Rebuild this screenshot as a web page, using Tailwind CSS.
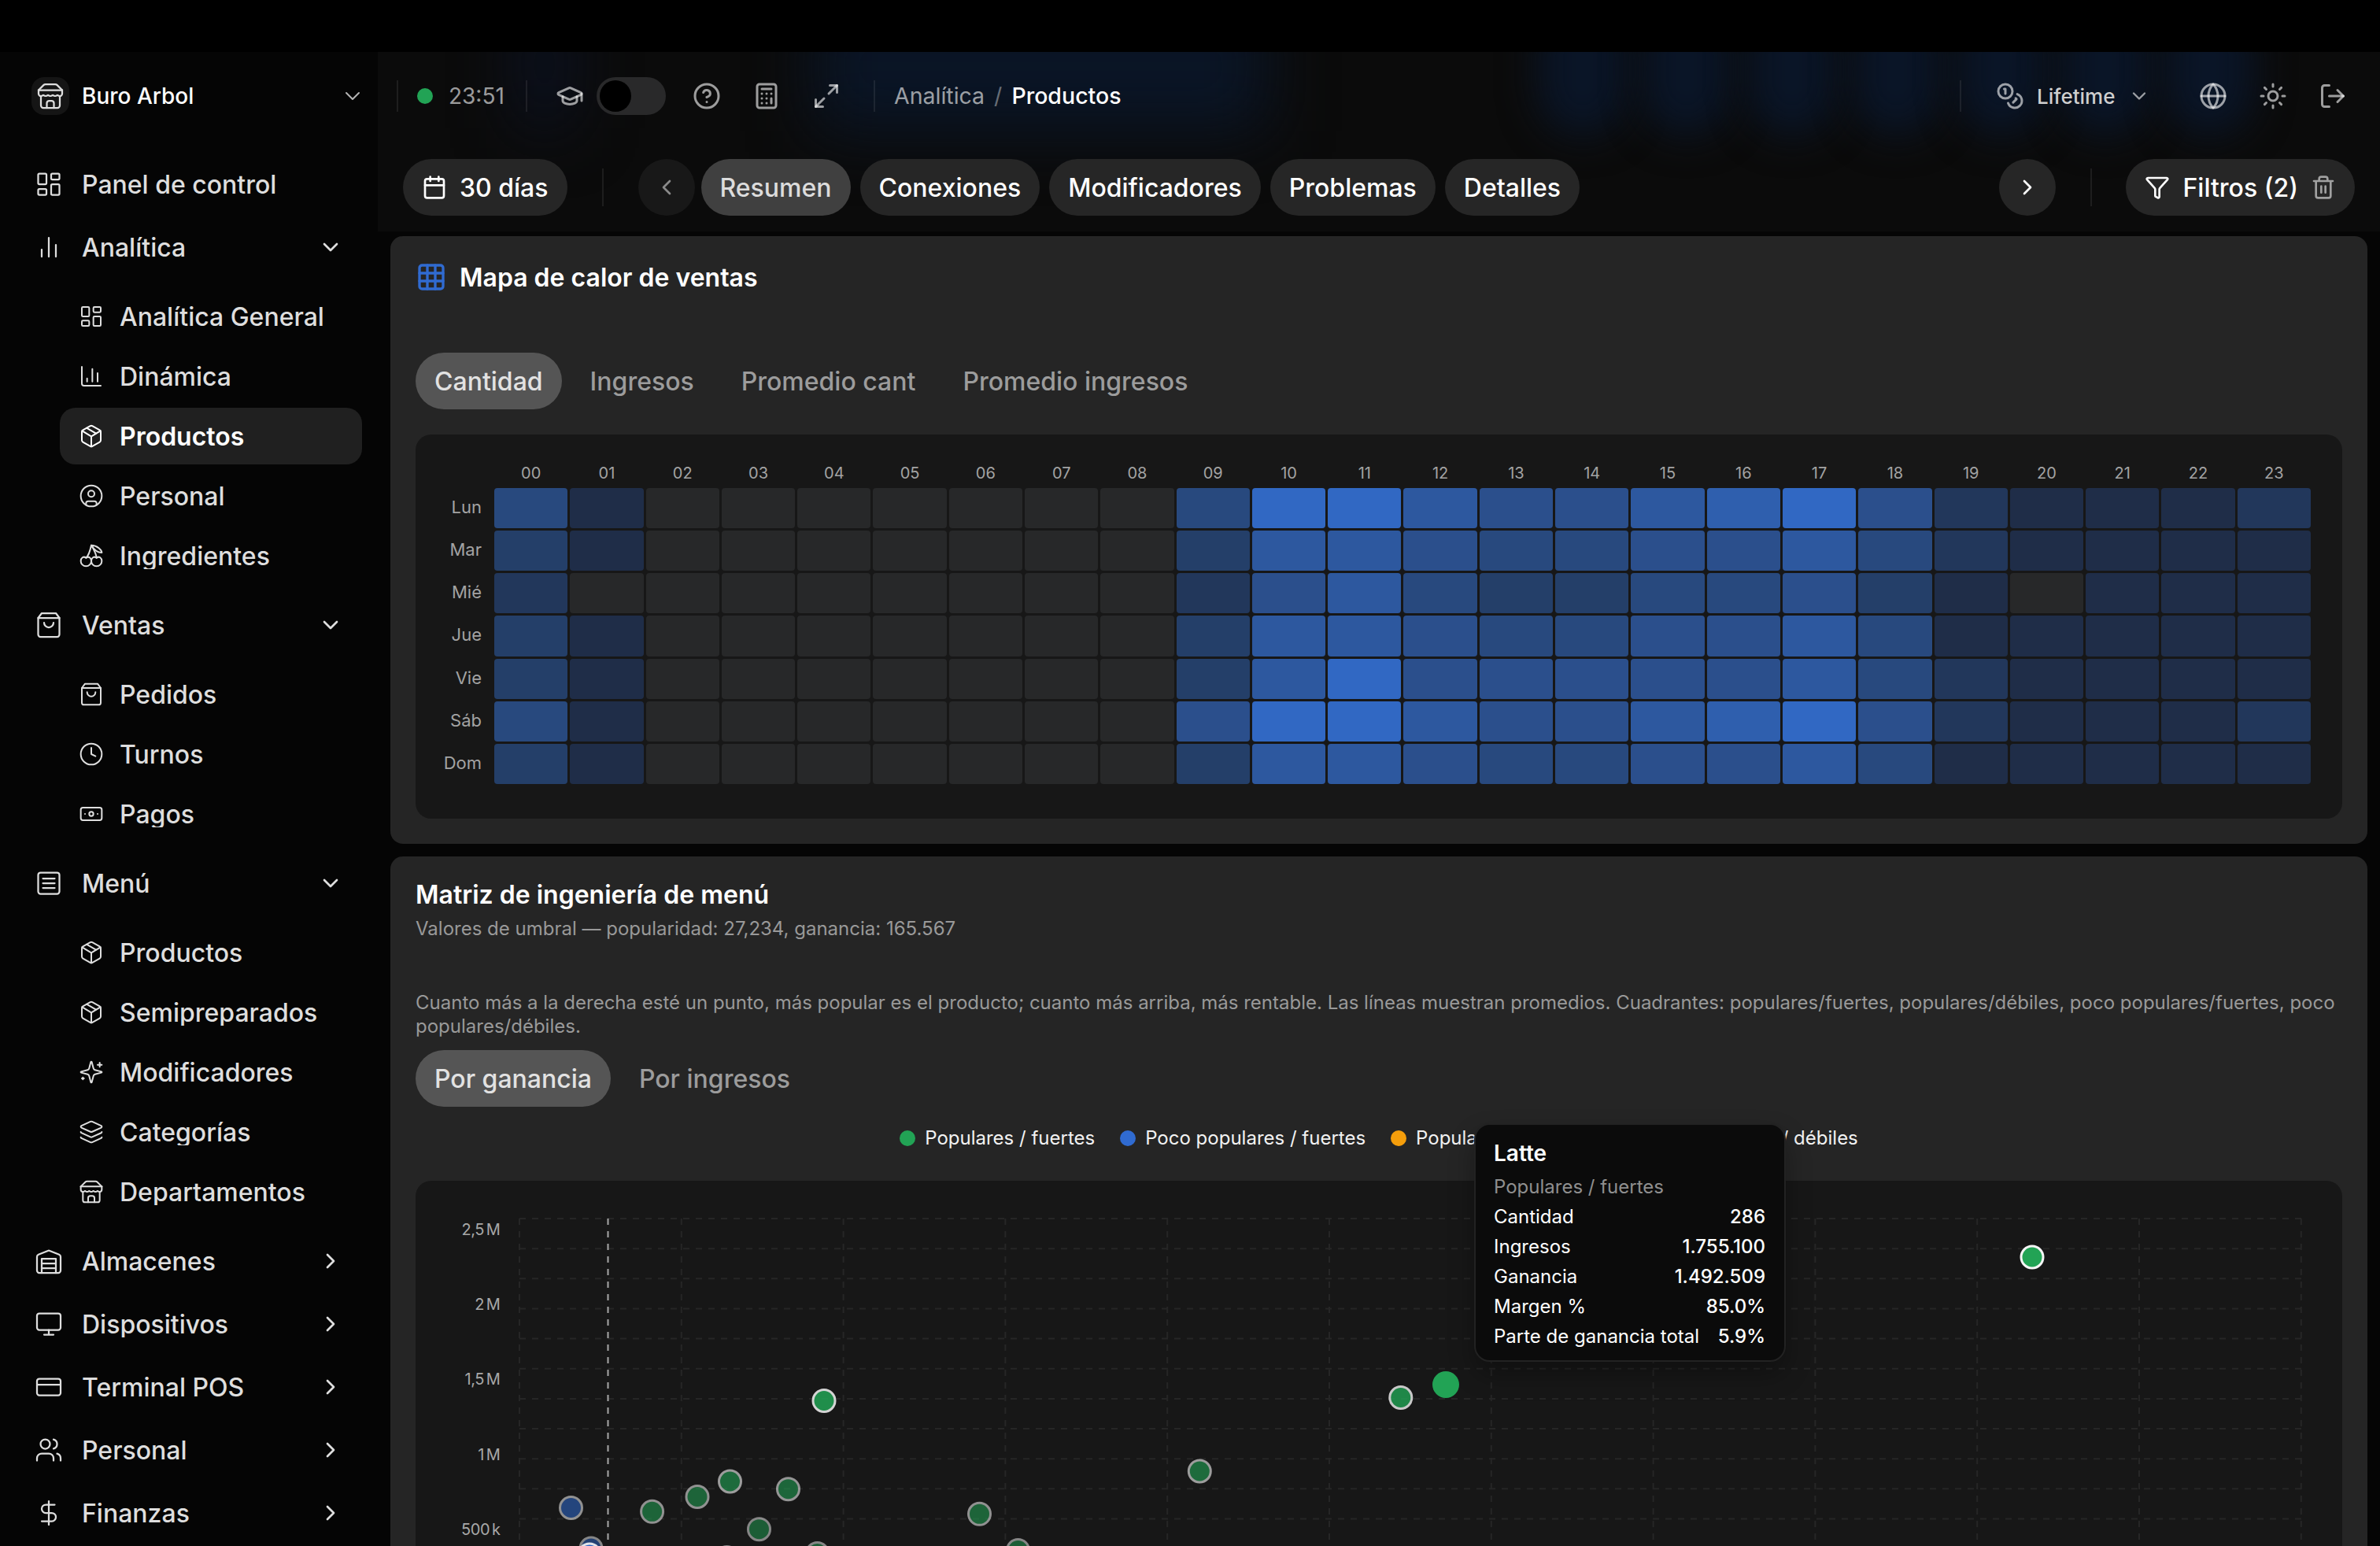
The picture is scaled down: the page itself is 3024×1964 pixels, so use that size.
<!DOCTYPE html>
<html lang="es">
  <head>
    <meta charset="UTF-8" />
    <meta name="viewport" content="width=device-width, initial-scale=1.0" />
    <title>Productos - Buro Arbol</title>
    <script src="https://cdn.jsdelivr.net/npm/@tailwindcss/browser@4"></script>
  </head>
  <body class="bg-black overflow-hidden font-['Inter','Liberation_Sans',sans-serif] [font-variation-settings:'opsz'_16]">
    <!-- icons -->
    <svg class="hidden">
      <symbol id="store" viewBox="0 0 24 24"><path d="m2 7 4.41-4.41A2 2 0 0 1 7.83 2h8.34a2 2 0 0 1 1.42.59L22 7" /><path d="M4 12v8a2 2 0 0 0 2 2h12a2 2 0 0 0 2-2v-8" /><path d="M15 22v-4a2 2 0 0 0-2-2h-2a2 2 0 0 0-2 2v4" /><path d="M2 7h20" /><path d="M22 7v3a2 2 0 0 1-2 2a2.7 2.7 0 0 1-1.59-.63.7.7 0 0 0-.82 0A2.7 2.7 0 0 1 16 12a2.7 2.7 0 0 1-1.59-.63.7.7 0 0 0-.82 0A2.7 2.7 0 0 1 12 12a2.7 2.7 0 0 1-1.59-.63.7.7 0 0 0-.82 0A2.7 2.7 0 0 1 8 12a2.7 2.7 0 0 1-1.59-.63.7.7 0 0 0-.82 0A2.7 2.7 0 0 1 4 12a2 2 0 0 1-2-2V7" /></symbol>
      <symbol id="down" viewBox="0 0 24 24"><path d="m6 9 6 6 6-6" /></symbol>
      <symbol id="right" viewBox="0 0 24 24"><path d="m9 18 6-6-6-6" /></symbol>
      <symbol id="left" viewBox="0 0 24 24"><path d="m15 18-6-6 6-6" /></symbol>
      <symbol id="dashboard" viewBox="0 0 24 24"><rect width="7" height="9" x="3" y="3" rx="1" /><rect width="7" height="5" x="14" y="3" rx="1" /><rect width="7" height="9" x="14" y="12" rx="1" /><rect width="7" height="5" x="3" y="16" rx="1" /></symbol>
      <symbol id="bars" viewBox="0 0 24 24"><path d="M18 20V10M12 20V4M6 20v-6" /></symbol>
      <symbol id="chart" viewBox="0 0 24 24"><path d="M3 3v16a2 2 0 0 0 2 2h16M18 17V9M13 17V5M8 17v-3" /></symbol>
      <symbol id="package" viewBox="0 0 24 24"><path d="M11 21.73a2 2 0 0 0 2 0l7-4A2 2 0 0 0 21 16V8a2 2 0 0 0-1-1.73l-7-4a2 2 0 0 0-2 0l-7 4A2 2 0 0 0 3 8v8a2 2 0 0 0 1 1.73z" /><path d="M12 22V12" /><path d="m3.3 7 7.703 4.734a2 2 0 0 0 1.994 0L20.7 7" /><path d="m7.5 4.27 9 5.15" /></symbol>
      <symbol id="user" viewBox="0 0 24 24"><circle cx="12" cy="12" r="10" /><circle cx="12" cy="10" r="3" /><path d="M7 20.662V19a2 2 0 0 1 2-2h6a2 2 0 0 1 2 2v1.662" /></symbol>
      <symbol id="cherry" viewBox="0 0 24 24"><path d="M2 17a5 5 0 0 0 10 0c0-2.76-2.5-5-5-3-2.5-2-5 .24-5 3Z" /><path d="M12 17a5 5 0 0 0 10 0c0-2.76-2.5-5-5-3-2.5-2-5 .24-5 3Z" /><path d="M7 14c3.22-2.91 4.29-8.75 5-12 1.66 2.38 4.94 9 5 12" /><path d="M22 9c-4.29 0-7.14-2.33-10-7 5.71 0 10 4.67 10 7Z" /></symbol>
      <symbol id="bag" viewBox="0 0 24 24"><path d="M6 2 3 6v14a2 2 0 0 0 2 2h14a2 2 0 0 0 2-2V6l-3-4Z" /><path d="M3 6h18" /><path d="M16 10a4 4 0 0 1-8 0" /></symbol>
      <symbol id="clock" viewBox="0 0 24 24"><circle cx="12" cy="12" r="10" /><path d="M12 6v6l4 2" /></symbol>
      <symbol id="cash" viewBox="0 0 24 24"><rect width="20" height="12" x="2" y="6" rx="2" /><circle cx="12" cy="12" r="2" /><path d="M6 12h.01M18 12h.01" /></symbol>
      <symbol id="menu" viewBox="0 0 24 24"><rect width="18" height="18" x="3" y="3" rx="2" /><path d="M7 8h10M7 12h10M7 16h10" /></symbol>
      <symbol id="sparkles" viewBox="0 0 24 24"><path d="M9.937 15.5A2 2 0 0 0 8.5 14.063l-6.135-1.582a.5.5 0 0 1 0-.962L8.5 9.936A2 2 0 0 0 9.937 8.5l1.582-6.135a.5.5 0 0 1 .963 0L14.063 8.5A2 2 0 0 0 15.5 9.937l6.135 1.581a.5.5 0 0 1 0 .964L15.5 14.063a2 2 0 0 0-1.437 1.437l-1.582 6.135a.5.5 0 0 1-.963 0z" /><path d="M20 3v4M22 5h-4M4 17v2M5 18H3" /></symbol>
      <symbol id="layers" viewBox="0 0 24 24"><path d="M12.83 2.18a2 2 0 0 0-1.66 0L2.6 6.08a1 1 0 0 0 0 1.83l8.58 3.91a2 2 0 0 0 1.66 0l8.58-3.9a1 1 0 0 0 0-1.83z" /><path d="M2 12a1 1 0 0 0 .58.91l8.6 3.91a2 2 0 0 0 1.65 0l8.58-3.9A1 1 0 0 0 22 12" /><path d="M2 17a1 1 0 0 0 .58.91l8.6 3.91a2 2 0 0 0 1.65 0l8.58-3.9A1 1 0 0 0 22 17" /></symbol>
      <symbol id="warehouse" viewBox="0 0 24 24"><path d="M22 8.35V20a2 2 0 0 1-2 2H4a2 2 0 0 1-2-2V8.35A2 2 0 0 1 3.26 6.5l8-3.2a2 2 0 0 1 1.48 0l8 3.2A2 2 0 0 1 22 8.35Z" /><path d="M6 18h12M6 14h12" /><path d="M6 22V10h12v12" /></symbol>
      <symbol id="monitor" viewBox="0 0 24 24"><rect width="20" height="14" x="2" y="3" rx="2" /><path d="M8 21h8M12 17v4" /></symbol>
      <symbol id="card" viewBox="0 0 24 24"><rect width="20" height="14" x="2" y="5" rx="2" /><path d="M2 10h20" /></symbol>
      <symbol id="users" viewBox="0 0 24 24"><path d="M16 21v-2a4 4 0 0 0-4-4H6a4 4 0 0 0-4 4v2" /><circle cx="9" cy="7" r="4" /><path d="M22 21v-2a4 4 0 0 0-3-3.87M16 3.13a4 4 0 0 1 0 7.75" /></symbol>
      <symbol id="dollar" viewBox="0 0 24 24"><path d="M12 2v20M17 5H9.5a3.5 3.5 0 0 0 0 7h5a3.5 3.5 0 0 1 0 7H6" /></symbol>
      <symbol id="cap" viewBox="0 0 24 24"><path d="M21.42 10.922a1 1 0 0 0-.019-1.838L12.83 5.18a2 2 0 0 0-1.66 0L2.6 9.08a1 1 0 0 0 0 1.832l8.57 3.908a2 2 0 0 0 1.66 0z" /><path d="M22 10v6" /><path d="M6 12.5V16a6 3 0 0 0 12 0v-3.5" /></symbol>
      <symbol id="help" viewBox="0 0 24 24"><circle cx="12" cy="12" r="10" /><path d="M9.09 9a3 3 0 0 1 5.83 1c0 2-3 3-3 3M12 17h.01" /></symbol>
      <symbol id="calculator" viewBox="0 0 24 24"><rect width="16" height="20" x="4" y="2" rx="2" /><path d="M8 6h8M16 14v4M16 10h.01M12 10h.01M8 10h.01M12 14h.01M8 14h.01M12 18h.01M8 18h.01" /></symbol>
      <symbol id="expand" viewBox="0 0 24 24"><path d="M15 3h6v6" /><path d="m21 3-7 7" /><path d="m3 21 7-7" /><path d="M9 21H3v-6" /></symbol>
      <symbol id="coins" viewBox="0 0 24 24"><circle cx="8" cy="8" r="6" /><path d="M18.09 10.37A6 6 0 1 1 10.34 18M7 6h1v4M16.71 13.88l.7.71-2.82 2.82" /></symbol>
      <symbol id="globe" viewBox="0 0 24 24"><circle cx="12" cy="12" r="10" /><path d="M12 2a14.5 14.5 0 0 0 0 20 14.5 14.5 0 0 0 0-20" /><path d="M2 12h20" /></symbol>
      <symbol id="sun" viewBox="0 0 24 24"><circle cx="12" cy="12" r="4" /><path d="M12 2v2M12 20v2M4.93 4.93l1.41 1.41M17.66 17.66l1.41 1.41M2 12h2M20 12h2M6.34 17.66l-1.41 1.41M19.07 4.93l-1.41 1.41" /></symbol>
      <symbol id="logout" viewBox="0 0 24 24"><path d="m16 17 5-5-5-5" /><path d="M21 12H9" /><path d="M9 21H5a2 2 0 0 1-2-2V5a2 2 0 0 1 2-2h4" /></symbol>
      <symbol id="calendar" viewBox="0 0 24 24"><path d="M8 2v4M16 2v4M3 10h18" /><rect width="18" height="18" x="3" y="4" rx="2" /></symbol>
      <symbol id="funnel" viewBox="0 0 24 24"><path d="M10 20a1 1 0 0 0 .553.895l2 1A1 1 0 0 0 14 21v-7a2 2 0 0 1 .517-1.341L21.74 4.67A1 1 0 0 0 21 3H3a1 1 0 0 0-.742 1.67l7.225 7.989A2 2 0 0 1 10 14z" /></symbol>
      <symbol id="trash" viewBox="0 0 24 24"><path d="M3 6h18M19 6v14a2 2 0 0 1-2 2H7a2 2 0 0 1-2-2V6M8 6V4a2 2 0 0 1 2-2h4a2 2 0 0 1 2 2v2M10 11v6M14 11v6" /></symbol>
      <symbol id="grid" viewBox="0 0 24 24"><rect width="18" height="18" x="3" y="3" rx="2" /><path d="M3 9h18M3 15h18M9 3v18M15 3v18" /></symbol>
    </svg>

    <div class="mt-[66px] flex h-[1898px] w-[3024px] bg-[#050505]">
      <aside class="w-[480px] shrink-0 overflow-hidden">
        <div class="flex h-28 items-center pl-10 pr-4">
          <div class="flex size-12 items-center justify-center rounded-2xl bg-[#151515] text-[#dedede]">
            <svg class="size-9 fill-none stroke-current stroke-[1.5] [stroke-linecap:round] [stroke-linejoin:round]"><use href="#store" /></svg>
          </div>
          <span class="ml-4 flex-1 text-[28px] font-medium text-white">Buro Arbol</span>
          <svg class="size-8 fill-none stroke-[#b5b5b5] stroke-[1.5] [stroke-linecap:round] [stroke-linejoin:round]"><use href="#down" /></svg>
        </div>
        <nav id="nav" class="mt-5 flex flex-col gap-2 text-[32px] font-medium leading-none text-[#dedede]"></nav>
      </aside>

      <div class="flex w-[2544px] flex-col">
        <header class="relative h-[228px] shrink-0 overflow-hidden bg-[#0b0b0b]">
          <!-- content glow behind the bar -->
          <div class="absolute -top-16 left-[180px] h-[160px] w-[64px] bg-[#0b1122] blur-2xl"></div>
          <div class="absolute -top-16 left-[555px] h-[165px] w-[575px] bg-[#0a1526] blur-2xl"></div>
          <div class="absolute -top-16 left-[1474px] h-[170px] w-[114px] rounded-full bg-[#0a1527] blur-xl"></div>
          <div class="absolute -top-16 left-[1606px] h-[170px] w-[114px] rounded-full bg-[#0a1527] blur-xl"></div>
          <div class="absolute -top-16 left-[1740px] h-[170px] w-[114px] rounded-full bg-[#0a1527] blur-xl"></div>
          <div class="absolute -top-16 left-[1873px] h-[170px] w-[114px] rounded-full bg-[#0a1527] blur-xl"></div>
          <div class="absolute -top-16 left-[2006px] h-[170px] w-[114px] rounded-full bg-[#0a1527] blur-xl"></div>
          <div class="absolute -top-16 left-[2138px] h-[170px] w-[114px] rounded-full bg-[#0a1527] blur-xl"></div>
          <div class="absolute -top-16 left-[2270px] h-[170px] w-[114px] rounded-full bg-[#0a1527] blur-xl"></div>

          <div class="relative flex h-28 items-center pl-6 pr-[42px] text-[28px] text-white/60 [&_svg]:fill-none [&_svg]:stroke-current [&_svg]:stroke-2 [&_svg]:[stroke-linecap:round] [&_svg]:[stroke-linejoin:round]">
            <div class="h-10 w-0.5 bg-white/8"></div>
            <div class="ml-6 size-5 rounded-full bg-[#22a355]"></div>
            <span class="ml-5 w-[78px]">23:51</span>
            <div class="ml-5 h-10 w-0.5 bg-white/8"></div>
            <svg class="ml-9 size-9"><use href="#cap" /></svg>
            <div class="ml-4 h-12 w-[88px] rounded-full bg-[#29292a] p-1">
              <div class="size-10 rounded-full bg-black"></div>
            </div>
            <svg class="ml-[34px] size-9"><use href="#help" /></svg>
            <svg class="ml-10 size-9"><use href="#calculator" /></svg>
            <svg class="ml-10 size-9"><use href="#expand" /></svg>
            <div class="ml-[42px] h-10 w-0.5 bg-white/8"></div>
            <div class="ml-6 flex gap-3 text-[28.5px]">
              <span>Analítica</span>
              <span class="text-white/40">/</span>
              <span class="font-medium text-white">Productos</span>
            </div>
            <div class="ml-auto h-10 w-0.5 bg-white/8"></div>
            <svg class="ml-11 size-9"><use href="#coins" /></svg>
            <span class="ml-4 w-[100px] text-[26px] font-medium text-[#cfcfcf]">Lifetime</span>
            <svg class="ml-4 size-7"><use href="#down" /></svg>
            <svg class="ml-[62px] size-9"><use href="#globe" /></svg>
            <svg class="ml-10 size-9"><use href="#sun" /></svg>
            <svg class="ml-10 size-9"><use href="#logout" /></svg>
          </div>

          <div class="relative mt-6 flex h-[72px] items-center px-8 text-[32px] font-medium text-white [&_svg]:size-8 [&_svg]:fill-none [&_svg]:stroke-current [&_svg]:stroke-2 [&_svg]:[stroke-linecap:round] [&_svg]:[stroke-linejoin:round]">
            <button class="flex h-full items-center gap-4 rounded-full bg-[#262626] px-6"><svg><use href="#calendar" /></svg><span class="pt-0.5">30 días</span></button>
            <div class="ml-11 h-12 w-0.5 bg-white/8"></div>
            <button class="ml-11 flex size-[72px] items-center justify-center rounded-full bg-[#181818] text-[#8a8a8a]"><svg><use href="#left" /></svg></button>
            <div class="ml-2 flex h-full gap-3">
              <button class="rounded-full bg-[#404040] px-6 pt-0.5 text-[#dcdcdc]">Resumen</button>
              <button class="rounded-full bg-[#262626] px-6 pt-0.5">Conexiones</button>
              <button class="rounded-full bg-[#262626] px-6 pt-0.5">Modificadores</button>
              <button class="rounded-full bg-[#262626] px-6 pt-0.5">Problemas</button>
              <button class="rounded-full bg-[#262626] px-6 pt-0.5">Detalles</button>
            </div>
            <button class="ml-auto flex size-[72px] items-center justify-center rounded-full bg-[#262626]"><svg><use href="#right" /></svg></button>
            <div class="ml-11 h-12 w-0.5 bg-white/8"></div>
            <button class="ml-[43px] flex h-full items-center gap-4 rounded-full bg-[#262626] px-6"><svg><use href="#funnel" /></svg><span class="pt-0.5">Filtros (2)</span><svg class="text-[#a0a0a0]"><use href="#trash" /></svg></button>
          </div>
        </header>

        <main class="flex flex-1 flex-col gap-4 overflow-hidden px-4 pt-1.5">
          <section class="h-[772px] shrink-0 rounded-2xl bg-[#252525] px-8 pt-8">
            <div class="flex h-10 items-center gap-4 text-[32px] font-semibold text-white">
              <svg class="size-10 fill-none stroke-[#306bd1] stroke-2 [stroke-linecap:round]"><use href="#grid" /></svg>
              <span class="pt-0.5">Mapa de calor de ventas</span>
            </div>
            <div class="mt-[76px] flex h-[72px] gap-3 text-[32px] font-medium text-[#9c9c9c]">
              <button class="rounded-full bg-[#555] px-6 pt-0.5 text-[#e2e2e2]">Cantidad</button>
              <button class="px-6 pt-0.5">Ingresos</button>
              <button class="px-6 pt-0.5">Promedio cant</button>
              <button class="px-6 pt-0.5">Promedio ingresos</button>
            </div>
            <div class="mt-8 h-[488px] rounded-[20px] bg-[#171717] pl-6 pr-10 pt-9 text-[#a3a3a3]">
              <div id="hours" class="ml-[76px] grid grid-cols-24 gap-[3px] text-center text-[20px] leading-[26px]"></div>
              <div class="mt-1.5 flex h-[376px]">
                <div class="grid w-[60px] grid-rows-7 items-center gap-[3px] text-right text-[22px] leading-none [&>span]:pb-[3px]">
                  <span>Lun</span><span>Mar</span><span>Mié</span><span>Jue</span><span>Vie</span><span>Sáb</span><span>Dom</span>
                </div>
                <div id="heat" class="ml-4 grid flex-1 grid-cols-24 grid-rows-7 gap-[3px]"></div>
              </div>
            </div>
          </section>

          <section class="relative h-[1100px] shrink-0 rounded-2xl bg-[#252525] px-8 pt-[29px]">
            <h2 class="text-[32px] font-semibold leading-[40px] text-white">Matriz de ingeniería de menú</h2>
            <p class="mt-[7px] text-[24px] leading-[32px] text-[#999]">Valores de umbral — popularidad: 27,234, ganancia: 165.567</p>
            <p class="mt-[63px] text-[24px] leading-[30px] text-[#999]">Cuanto más a la derecha esté un punto, más popular es el producto; cuanto más arriba, más rentable. Las líneas muestran promedios. Cuadrantes: populares/fuertes, populares/débiles, poco populares/fuertes, poco populares/débiles.</p>
            <div class="mt-[15px] flex h-[72px] gap-3 text-[32px] font-medium text-[#9c9c9c]">
              <button class="rounded-full bg-[#555] px-6 pt-0.5 text-[#e2e2e2]">Por ganancia</button>
              <button class="px-6 pt-0.5">Por ingresos</button>
            </div>
            <div class="mt-[25px] flex justify-center gap-8 text-[24px] leading-[30px] text-[#f2f2f2]">
              <span class="flex items-center gap-3"><i class="size-5 rounded-full bg-[#22a355]"></i>Populares / fuertes</span>
              <span class="flex items-center gap-3"><i class="size-5 rounded-full bg-[#306bd1]"></i>Poco populares / fuertes</span>
              <span class="flex items-center gap-3"><i class="size-5 rounded-full bg-[#f59e0b]"></i>Populares / débiles</span>
              <span class="flex items-center gap-3"><i class="size-5 rounded-full bg-[#dc2626]"></i>Poco populares / débiles</span>
            </div>
            <div class="mt-[39px] h-[600px] rounded-[20px] bg-[#171717]">
              <svg id="matrix" class="h-[600px] w-[2448px]" viewBox="528 1500 2448 600"></svg>
            </div>

            <div class="absolute left-[1377px] top-[339px] h-[303px] w-[396px] rounded-[20px] border-2 border-[#222] bg-[#0b0b0b] pl-[23px] pr-6 pt-[17px] text-[24px] leading-[38px] text-white shadow-[0_16px_32px_rgba(0,0,0,0.3)]">
              <div class="text-[28px] font-semibold">Latte</div>
              <div class="mt-[5px] text-[#8f8f8f]">Populares / fuertes</div>
              <div class="flex justify-between"><span>Cantidad</span><span class="font-medium">286</span></div>
              <div class="flex justify-between"><span>Ingresos</span><span class="font-medium">1.755.100</span></div>
              <div class="flex justify-between"><span>Ganancia</span><span class="font-medium">1.492.509</span></div>
              <div class="flex justify-between"><span>Margen %</span><span class="font-medium">85.0%</span></div>
              <div class="flex justify-between"><span>Parte de ganancia total</span><span class="font-medium">5.9%</span></div>
            </div>
          </section>
        </main>
      </div>
    </div>

    <script>
      const menu = [
        ["dashboard", "Panel de control"],
        ["bars", "Analítica", [["dashboard", "Analítica General"], ["chart", "Dinámica"], ["package", "Productos", true], ["user", "Personal"], ["cherry", "Ingredientes"]]],
        ["bag", "Ventas", [["bag", "Pedidos"], ["clock", "Turnos"], ["cash", "Pagos"]]],
        ["menu", "Menú", [["package", "Productos"], ["package", "Semipreparados"], ["sparkles", "Modificadores"], ["layers", "Categorías"], ["store", "Departamentos"]]],
        ["warehouse", "Almacenes", []],
        ["monitor", "Dispositivos", []],
        ["card", "Terminal POS", []],
        ["users", "Personal", []],
        ["dollar", "Finanzas", []],
      ];
      const stroke = "shrink-0 fill-none stroke-current [stroke-linecap:round] [stroke-linejoin:round]";

      document.getElementById("nav").innerHTML = menu.map(([icon, label, items]) => {
        let html = `<div class="flex h-[72px] shrink-0 items-center pl-11 pr-11">
          <svg class="size-9 stroke-[1.5] ${stroke}"><use href="#${icon}" /></svg>
          <span class="ml-6 flex-1 truncate pt-0.5">${label}</span>
          ${items ? `<svg class="size-8 stroke-2 ${stroke}"><use href="#${items.length ? "down" : "right"}" /></svg>` : ""}
        </div>`;
        if (items && items.length) {
          html += `<div class="my-2 ml-[76px] mr-5 flex flex-col gap-1">` + items.map(([i, name, active]) =>
            `<div class="flex h-[72px] items-center rounded-[20px] px-6 ${active ? "bg-[#202020] font-semibold text-white" : ""}">
              <svg class="size-8 stroke-[1.5] ${stroke}"><use href="#${i}" /></svg>
              <span class="ml-5 truncate pt-0.5">${name}</span>
            </div>`).join("") + `</div>`;
        }
        return html;
      }).join("");

      // sales heatmap, one row per weekday, one digit per hour
      const week = [
        "410000000488655678521112",
        "310000000366544556421111",
        "200000000256433445310111",
        "310000000366544556411111",
        "310000000368555556421111",
        "410000000588655678521112",
        "310000000366544556411111",
      ];
      const shades = ["bg-[#272829]", "bg-[#1f2d48]", "bg-[#22375b]", "bg-[#243f69]", "bg-[#28497e]", "bg-[#2b4f8c]", "bg-[#2d589f]", "bg-[#2f5fae]", "bg-[#3168c3]"];
      document.getElementById("hours").innerHTML = [...week[0]].map((_, i) => `<span>${String(i).padStart(2, "0")}</span>`).join("");
      document.getElementById("heat").innerHTML = week.map((row) => [...row].map((v) => `<div class="rounded-[4px] ${shades[v]}"></div>`).join("")).join("");

      // menu matrix
      let svg = "";
      for (let i = 0; i < 12; i++) {
        const x = 660 + i * 205.8;
        svg += `<path d="M${x} 1548V2100" stroke="#262626" stroke-width="2" stroke-dasharray="8 8" />`;
      }
      for (let i = 0; i < 12; i++) {
        const y = 1548 + i * 38.15;
        svg += `<path d="M660 ${y}H2924" stroke="#262626" stroke-width="2" stroke-dasharray="8 8" />`;
      }
      svg += `<path d="M772.5 1548V2100" stroke="#a8a8a8" stroke-width="2" stroke-dasharray="8 8" />`;
      ["2,5 M", "2 M", "1,5 M", "1 M", "500 k"].forEach((t, i) => {
        svg += `<text x="635.5" y="${1568.5 + i * 95.4}" text-anchor="end" font-size="20" letter-spacing="-0.4" word-spacing="-2.5" fill="#a8a8a8">${t}</text>`;
      });
      const green = "#22a355";
      const blue = "#306bd1";
      const dots = [
        [2582, 1597, green, 1], [1779.8, 1775.5, green, 0.8], [1047, 1779.5, green, 0.85],
        [1524.3, 1869, green, 0.6], [927.5, 1882, green, 0.6], [1001.5, 1891.7, green, 0.57],
        [886, 1901.5, green, 0.55], [725.5, 1915.5, blue, 0.55], [828.6, 1920.3, green, 0.55],
        [1244.5, 1923.3, green, 0.55], [964.5, 1942.7, green, 0.5], [751, 1967, blue, 0.5],
        [749, 1975, blue, 0.9], [1293.5, 1969.5, green, 0.5], [1038.5, 1973.5, green, 0.5], [923.5, 1978.5, green, 0.5],
      ];
      dots.forEach(([x, y, c, o]) => {
        svg += `<circle cx="${x}" cy="${y}" r="14" fill="${c}" stroke="#f5f5f5" stroke-width="3" opacity="${o}" />`;
      });
      svg += `<circle cx="1837" cy="1759" r="17" fill="${green}" />`;
      document.getElementById("matrix").innerHTML = svg;
    </script>
  </body>
</html>
